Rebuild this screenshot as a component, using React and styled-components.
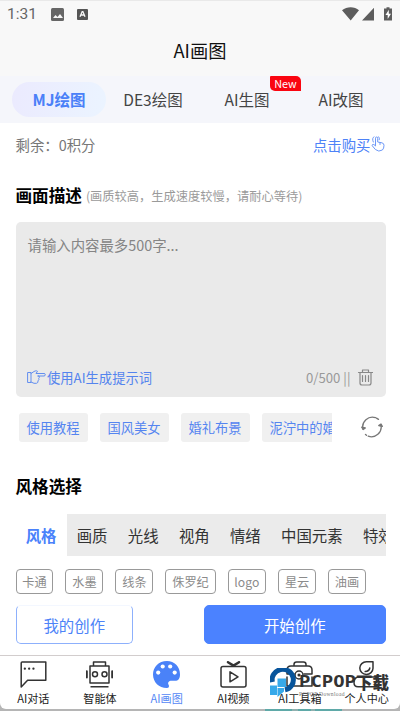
import React from "react";
import styled, { createGlobalStyle } from "styled-components";

const Global = createGlobalStyle`
  * { box-sizing: border-box; }
  html, body { margin: 0; background: #a9a9a9; }
  body { font-family: "Noto Sans CJK SC", "Noto Sans", sans-serif; overflow: hidden; }
`;

const Screen = styled.div`
  position: relative;
  width: 400px;
  height: 711px;
  display: flex;
  flex-direction: column;
  overflow: hidden;
  background: #b5b5b5;
  border-top: 1px solid #e9e9e9;
`;

const Header = styled.header`
  height: 75px;
  flex: none;
  background: #f8f8f8;
`;

const StatusBar = styled.div`
  height: 26px;
  padding: 0 7px;
  display: flex;
  align-items: center;
  font: 15.5px/26px Roboto, sans-serif;
  color: #666;
`;

const StatusIcons = styled.div`
  display: flex;
  align-items: center;
  margin-left: ${(p) => (p.$end ? "auto" : "14px")};
`;

const Title = styled.h1`
  margin: 0;
  height: 49px;
  line-height: 46px;
  text-align: center;
  font-size: 18.3px;
  font-weight: 400;
  color: #111;
`;

const ModeTabs = styled.nav`
  height: 47px;
  flex: none;
  padding: 0 12px 0 12px;
  display: flex;
  align-items: center;
  background: #f5f6fb;
`;

const ModeTab = styled.div`
  position: relative;
  width: 94px;
  height: 35px;
  line-height: 34px;
  text-align: center;
  font-size: 15.5px;
  color: ${(p) => (p.$active ? "#4a80f8" : "#444")};
  font-weight: ${(p) => (p.$active ? 700 : 400)};
  background: ${(p) => (p.$active ? "linear-gradient(100deg, #ebeafe, #ebf4ff)" : "none")};
  border-radius: 18px;
`;

const NewBadge = styled.span`
  position: absolute;
  left: 70px;
  top: -6px;
  width: 31px;
  height: 15px;
  line-height: 15px;
  font-size: 10.8px;
  color: #fff;
  background: #fa0510;
  border-radius: 1px 5px 0 5px;
`;

const Content = styled.main`
  height: 532px;
  flex: none;
  padding: 0 14.5px 0 15.5px;
  display: flex;
  flex-direction: column;
  background: #fff;
`;

const BalanceRow = styled.div`
  height: 42px;
  margin-bottom: 1px;
  display: flex;
  align-items: center;
  justify-content: space-between;
  font-size: 14.4px;
  color: #777;
`;

const BuyLink = styled.span`
  display: flex;
  align-items: center;
  margin-right: 1px;
  color: #4d82f7;
`;

const Heading = styled.h2`
  margin: 0;
  height: ${(p) => p.$height}px;
  display: flex;
  align-items: center;
  font-size: 16.6px;
  font-weight: 700;
  color: #000;
`;

const Note = styled.small`
  margin: 2px 0 0 4px;
  font-size: 12.25px;
  font-weight: 400;
  color: #9a9a9a;
`;

const PromptBox = styled.section`
  height: 175px;
  margin-top: -1px;
  padding: 11px 13px 9px 11px;
  display: flex;
  flex-direction: column;
  justify-content: space-between;
  background: #eaeaea;
  border-radius: 5px;
`;

const Placeholder = styled.div`
  font-size: 14.4px;
  line-height: 24px;
  padding-left: 1px;
  color: #858585;
`;

const PromptFooter = styled.div`
  height: 22px;
  display: flex;
  align-items: center;
  font-size: 13.2px;
  color: #999;
`;

const Generate = styled.span`
  display: flex;
  align-items: center;
  gap: 1.5px;
  margin-right: auto;
  font-size: 13.3px;
  color: #5484ee;
`;

const Suggestions = styled.div`
  height: 60px;
  padding: 0 2.5px 0 3px;
  display: flex;
  align-items: center;
  justify-content: space-between;
`;

const ChipStrip = styled.div`
  width: 313.5px;
  display: flex;
  gap: 12px;
  overflow: hidden;
`;

const Chip = styled.span`
  flex: none;
  height: 29px;
  padding: 0 8px;
  line-height: 30px;
  font-size: 13.25px;
  color: #5585f0;
  background: #f0f0f0;
  border-radius: 3px;
`;

const StyleTabs = styled.div`
  height: 42px;
  flex: none;
  display: flex;
  overflow: hidden;
`;

const StyleTab = styled.span`
  flex: none;
  padding: 0 10.15px;
  line-height: 43px;
  font-size: 15.4px;
  color: ${(p) => (p.$active ? "#4a82fb" : "#333")};
  font-weight: ${(p) => (p.$active ? 700 : 400)};
  background: ${(p) => (p.$active ? "#fff" : "#ebebeb")};
`;

const Tags = styled.div`
  margin-top: 13px;
  display: flex;
  gap: 12px;
`;

const Tag = styled.span`
  height: 25px;
  padding: 0 5.8px;
  line-height: 24px;
  font-size: 12.2px;
  color: #8b8b8b;
  border: 1px solid #999;
  border-radius: 4px;
`;

const Actions = styled.div`
  margin-top: 11px;
  display: flex;
  justify-content: space-between;
`;

const ActionButton = styled.button`
  width: ${(p) => (p.$primary ? 181.5 : 117.5)}px;
  height: 39px;
  padding: 0;
  font: 400 15.4px "Noto Sans CJK SC", sans-serif;
  color: ${(p) => (p.$primary ? "#fff" : "#4d83f8")};
  background: ${(p) => (p.$primary ? "#4b82ff" : "#fff")};
  border: 1px solid ${(p) => (p.$primary ? "#4b82ff" : "#8db0fc")};
  border-top-color: ${(p) => (p.$primary ? "#4b82ff" : "#f3f7ff")};
  border-radius: 5px;
`;

const BottomNav = styled.nav`
  height: 54px;
  flex: none;
  display: grid;
  grid-template-columns: repeat(6, 1fr);
  border-top: 1px solid #d2cdcd;
  border-radius: 0 0 6px 6px;
  background: #fff;
`;

const NavItem = styled.div`
  padding-top: 5px;
  display: flex;
  flex-direction: column;
  align-items: center;
  font-size: 11.1px;
  line-height: 20px;
  white-space: nowrap;
  color: ${(p) => (p.$active ? "#5588f5" : "#222")};
`;

const Watermark = styled.div`
  position: absolute;
  left: 270px;
  top: 667px;
  width: 122px;
  height: 32px;
  display: flex;
`;

const Brand = styled.div`
  margin-left: 1px;
  padding-top: 5px;
`;

const BrandName = styled.div`
  display: flex;
  align-items: center;
  height: 19px;
  color: #333;
  white-space: nowrap;
`;

const BrandLatin = styled.span`
  width: 57px;
  font: 700 15px/19px "DejaVu Sans Mono", monospace;
  transform: scaleX(1.26);
  transform-origin: left;
`;

const BrandChinese = styled.span`
  font: 900 16.5px/19px "Noto Sans CJK SC", sans-serif;
`;

const BrandCaption = styled.div`
  height: 7px;
  font: 5.6px/6px "Liberation Serif", serif;
  margin-top: -1px;
  color: #777;
  letter-spacing: 0.3px;
`;

const EdgeMark = styled.div`
  flex: none;
  margin-left: 265px;
  width: 77px;
  height: 2px;
  background: linear-gradient(90deg, #5fa9a8 35%, #91b0af 35% 43%, #5fa9a8 43% 60%, #91b0af 60% 65%, #5fa9a8 65%);
`;

const Line = ({ w = 27, h = 27, box = "0 0 27 27", color = "#333", sw = 1.5, children }) => (
  <svg width={w} height={h} viewBox={box} fill="none" stroke={color} strokeWidth={sw} strokeLinecap="round" strokeLinejoin="round">
    {children}
  </svg>
);

const icons = {
  chat: <Line><path d="M1.2 26V2q0-1 1-1h23.6v18.2H7.6z" /><path d="M4.8 7.7h.1M9.1 7.7h.1M13.4 7.7h.1" strokeWidth="2.2" /></Line>,
  robot: <Line><path d="M7.5 5V1h12v4M4 5h19v17H4zM4.5 25.8h18" strokeLinecap="butt" /><circle cx="9" cy="13.2" r="2.5" /><circle cx="18.5" cy="13.2" r="2.5" /><path d="M.8 10.2v6.2M26.2 10.2v6.2" strokeWidth="2" /></Line>,
  palette: <svg width="27" height="27" viewBox="0 0 27 27"><path fill="#4a82f8" d="M14 0C5.6 0 0 6 0 13.4C0 21 6 27 13.8 27c2.3 0 2.6-1.8 1.8-3.2c-1.2-2.2.2-4 2.9-4H22c3.3 0 5-2.4 5-6.4C27 5.5 21.4 0 14 0z" /><g fill="#fff"><circle cx="9.7" cy="5.5" r="2.1" /><circle cx="17.2" cy="5.5" r="2.1" /><circle cx="5.2" cy="11.6" r="2.1" /><circle cx="21.7" cy="11.6" r="2.1" /></g></svg>,
  video: <Line><rect x="1" y="5.5" width="25" height="20.5" rx="2" /><path d="M8 1.2l5.5 3.4L19 1.2" strokeWidth="2.5" /><path d="M10 10.8l8 5-8 5z" /></Line>,
  tools: <Line><path d="M8 5V3.5Q8 1 10.5 1h7Q20 1 20 3.5V5M1 13V9q0-4 4-4h17q4 0 4 4v4M1 16v9h25v-9M1 13h7M18 13h8" /><circle cx="13" cy="14" r="4" /><circle cx="13" cy="14" r=".8" /></Line>,
  person: <Line><path d="M20 .8h-6.6A6.6 6.3 0 1 0 20 7.2z" /><path d="M12.2 10.6q4-.4 4.6-3.6M5 25.8Q1 25.8 1 21.5 1 16 6 16h15q5 0 5 5.5 0 4.3-4 4.3z" /></Line>,
};

const nav = [
  ["AI对话", icons.chat],
  ["智能体", icons.robot],
  ["AI画图", icons.palette],
  ["AI视频", icons.video],
  ["AI工具箱", icons.tools],
  ["个人中心", icons.person],
];

export default function App() {
  return (
    <Screen>
      <Global />
      <Header>
        <StatusBar>
          1:31
          <StatusIcons>
            <svg width="38" height="13" viewBox="0 0 38 13">
              <rect x="0" y="0" width="13" height="13" rx="1.5" fill="#666" />
              <path d="M2 10l2.5-3 2 2L9 6l3 4z" fill="#f8f8f8" />
              <rect x="26" y="1" width="11" height="11" rx="1" fill="#555" />
              <path d="M29 8.7L31.2 3.6h.7L34 8.7M29.8 7h3.4" fill="none" stroke="#f8f8f8" strokeWidth="1.3" />
            </svg>
          </StatusIcons>
          <StatusIcons $end>
            <svg width="51" height="15" viewBox="0 1 51 15" fill="#5d5d5d">
              <path d="M0 4.2C5 .2 12.5.2 17 4.2L8.7 14.5zM32 1.8v12.7H20zM44.5 2.6V1.3h3v1.3H50v12h-8v-12z" />
              <path d="M46.8 3.8L43.5 9h2.2v4L49 7.7h-2.2z" fill="#fff" />
            </svg>
          </StatusIcons>
        </StatusBar>
        <Title>AI画图</Title>
      </Header>

      <ModeTabs>
        <ModeTab $active>MJ绘图</ModeTab>
        <ModeTab>DE3绘图</ModeTab>
        <ModeTab>AI生图<NewBadge>New</NewBadge></ModeTab>
        <ModeTab>AI改图</ModeTab>
      </ModeTabs>

      <Content>
        <BalanceRow>
          <span>剩余：0积分</span>
          <BuyLink>
            点击购买
            <Line w={14} h={16} box="0 0 14 16" color="#6d98f7" sw={1}>
              <path d="M4.5 9.5V2.2q0-1.2 1.1-1.2t1.1 1.2V6l4.2.8q2.1.5 2.1 2.5 0 3.2-1.6 4.7-3.7 2.4-7-.5L1.2 9.7Q1 8 2.8 8.5l1.7 1.3M9 6.5v2M2.3 6Q.5 2 3 .8M8.3 3.8Q9 2.3 7.7.8" />
            </Line>
          </BuyLink>
        </BalanceRow>

        <Heading $height={57}>画面描述<Note>(画质较高，生成速度较慢，请耐心等待)</Note></Heading>

        <PromptBox>
          <Placeholder>请输入内容最多500字...</Placeholder>
          <PromptFooter>
            <Generate>
              <Line w={19} h={15} box="0 0 19 15" color="#628eef" sw={1}>
                <path d="M1 2.5h3v10H1zM4 3.5l3-2q1-.7 2.5-.7l1 .5L9 3.5h8q1.3 0 1.3 1.2T17 6h-6M11 6h1q1 1.3-.3 2.3Q12.5 10 11 10.8q.4 2-1.5 2.5H7L4 12" />
              </Line>
              使用AI生成提示词
            </Generate>
            0/500 ||
            <Line w={22} h={17} box="-14 0 22 17" color="#888" sw={1.2}>
              <path d="M-6.5 3.5H7.5M-2.5 3V1h6v2M-5 4v10q0 2 2 2h7q2 0 2-2V4M-2.5 6.5v6M.5 6.5v6M3.5 6.5v6" />
            </Line>
          </PromptFooter>
        </PromptBox>

        <Suggestions>
          <ChipStrip>
            {["使用教程", "国风美女", "婚礼布景", "泥泞中的婚纱"].map((t) => <Chip key={t}>{t}</Chip>)}
          </ChipStrip>
          <Line w={22} h={22} box="0 0 22 22" color="#777" sw={1.3}>
            <path d="M14.5 1.6A9.8 9.8 0 0 0 1.9 13M7.2 20.2A9.8 9.8 0 0 0 20 9M15.5 2.1l2 1.3M4.5 18.5l1 .8" />
            <path d="M.7 11.2L2.2 13.5l2.1-1.6zM17.7 9.5L20 8l1.3 2.4z" fill="#777" />
          </Line>
        </Suggestions>

        <Heading $height={57}>风格选择</Heading>

        <StyleTabs>
          {["风格", "画质", "光线", "视角", "情绪", "中国元素", "特效"].map((t, i) => (
            <StyleTab key={t} $active={i === 0}>{t}</StyleTab>
          ))}
        </StyleTabs>

        <Tags>
          {["卡通", "水墨", "线条", "侏罗纪", "logo", "星云", "油画"].map((t) => <Tag key={t}>{t}</Tag>)}
        </Tags>

        <Actions>
          <ActionButton>我的创作</ActionButton>
          <ActionButton $primary>开始创作</ActionButton>
        </Actions>
      </Content>

      <BottomNav>
        {nav.map(([label, icon], i) => (
          <NavItem key={label} $active={i === 2}>{icon}{label}</NavItem>
        ))}
      </BottomNav>
      <EdgeMark />

      <Watermark>
        <svg width="28" height="30" viewBox="0 0 28 30">
          <path d="M2.4 14A10.6 10.4 0 1 1 15 21.9" fill="none" stroke="#07549b" strokeWidth="5" />
          <path d="M7.5 10.5H16V19H7.5z" fill="#37a9e9" />
          <path d="M0 17.5h7V27H0zM7.5 20H14v3.5L7.5 29z" fill="#37a9e9" />
        </svg>
        <Brand>
          <BrandName><BrandLatin>PCPOP</BrandLatin><BrandChinese>下载</BrandChinese></BrandName>
          <BrandCaption>PCPOP Download</BrandCaption>
        </Brand>
      </Watermark>
    </Screen>
  );
}
